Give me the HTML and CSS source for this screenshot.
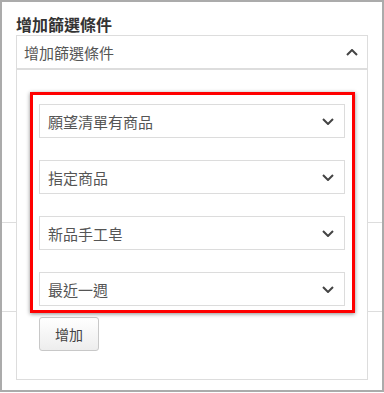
FILE: index.html
```html
<!DOCTYPE html>
<html lang="zh-Hant">
<head>
<meta charset="utf-8">
<link rel="stylesheet" href="styles.css">
</head>
<body>
<div class="frame">
  <div class="filter">
    <div class="title">增加篩選條件</div>
    <div class="dropdown">
      <div class="dd-header">
        <span>增加篩選條件</span>
        <svg class="chev" width="12" height="7" viewBox="0 0 12 7"><path d="M1 6 L6 1 L11 6" fill="none" stroke="#444" stroke-width="2"/></svg>
      </div>
      <div class="dd-panel">
        <div class="field"><span>願望清單有商品</span><svg class="chev" width="12" height="7" viewBox="0 0 12 7"><path d="M1 1 L6 6 L11 1" fill="none" stroke="#444" stroke-width="2"/></svg></div>
        <div class="field"><span>指定商品</span><svg class="chev" width="12" height="7" viewBox="0 0 12 7"><path d="M1 1 L6 6 L11 1" fill="none" stroke="#444" stroke-width="2"/></svg></div>
        <div class="field"><span>新品手工皂</span><svg class="chev" width="12" height="7" viewBox="0 0 12 7"><path d="M1 1 L6 6 L11 1" fill="none" stroke="#444" stroke-width="2"/></svg></div>
        <div class="field"><span>最近一週</span><svg class="chev" width="12" height="7" viewBox="0 0 12 7"><path d="M1 1 L6 6 L11 1" fill="none" stroke="#444" stroke-width="2"/></svg></div>
        <button class="btn">增加</button>
        <div class="highlight"></div>
      </div>
    </div>
  </div>
  <div class="row row1"></div>
  <div class="row row2"></div>
</div>
</body>
</html>
```

FILE: styles.css
```css
* { box-sizing: border-box; }
html, body { margin: 0; padding: 0; background: #fff; }
body {
  font-family: "Noto Sans CJK TC", "Noto Sans", sans-serif;
  color: #555;
}
.frame {
  width: 384px;
  height: 392px;
  border: 2px solid #ababab;
  background: #fff;
  overflow: hidden;
}
.filter {
  padding: 12px 14px 0;
}
.title {
  font-size: 16px;
  font-weight: bold;
  line-height: 20px;
  height: 20px;
  color: #333;
  margin-bottom: 1px;
}
.dropdown {
  position: relative;
}
.dd-header {
  height: 34px;
  border: 1px solid #ddd;
  display: flex;
  align-items: center;
  justify-content: space-between;
  padding: 0 9px 0 7px;
  font-size: 15px;
  color: #555;
}
.dd-panel {
  position: absolute;
  top: 100%;
  left: 0;
  right: 0;
  height: 311px;
  border: 1px solid #ddd;
  background: #fff;
  padding: 34px 22px 0;
  display: flex;
  flex-direction: column;
  align-items: flex-start;
  z-index: 2;
}
.field {
  width: 100%;
  height: 34px;
  border: 1px solid #dcdcdc;
  display: flex;
  align-items: center;
  justify-content: space-between;
  padding: 0 10px 0 8px;
  font-size: 15px;
  color: #555;
  margin-bottom: 22px;
  flex: none;
}
.field:nth-of-type(4) { margin-bottom: 11px; }
.chev { display: block; flex: none; }
.btn {
  width: 60px;
  height: 34px;
  border: 1px solid #c8c8c8;
  border-radius: 3px;
  background: linear-gradient(#ffffff, #ededed);
  font-family: inherit;
  font-size: 14px;
  color: #444;
  padding: 0;
}
.highlight {
  position: absolute;
  left: 13px;
  top: 22px;
  width: 325px;
  height: 221px;
  border: 3px solid #ff0000;
  box-shadow: 0 1px 4px rgba(0, 0, 0, 0.45);
  pointer-events: none;
}
.row {
  border-bottom: 1px solid #ddd;
}
.row1 { height: 154px; }
.row2 { height: 89px; }
```
